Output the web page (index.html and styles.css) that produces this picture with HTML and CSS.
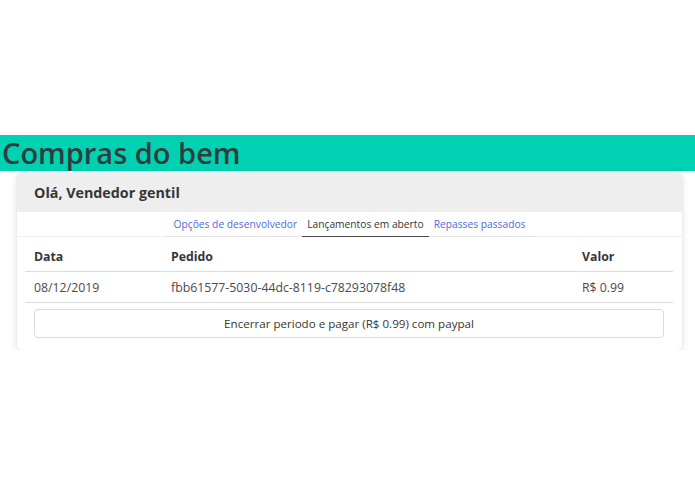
FILE: index.html
```html
<!DOCTYPE html>
<html lang="pt">
<head>
<meta charset="utf-8">
<title>Compras do bem</title>
<link rel="stylesheet" href="styles.css">
</head>
<body>
<header class="hero">
  <h1 class="hero-title">Compras do bem</h1>
</header>
<section class="card">
  <div class="card-header">Olá, Vendedor gentil</div>
  <nav class="tabs-row">
    <ul class="tabs">
      <li class="tab"><a class="tab-link">Opções de desenvolvedor</a></li>
      <li class="tab is-active"><a class="tab-link">Lançamentos em aberto</a></li>
      <li class="tab"><a class="tab-link">Repasses passados</a></li>
    </ul>
  </nav>
  <div class="card-body">
    <table class="table">
      <thead>
        <tr><th class="col-data">Data</th><th class="col-pedido">Pedido</th><th class="col-valor">Valor</th></tr>
      </thead>
      <tbody>
        <tr><td>08/12/2019</td><td>fbb61577-5030-44dc-8119-c78293078f48</td><td>R$ 0.99</td></tr>
      </tbody>
    </table>
    <button class="pay-button">Encerrar periodo e pagar (R$ 0.99) com paypal</button>
  </div>
</section>
</body>
</html>
```
FILE: styles.css
```css
html, body {
  margin: 0;
  padding: 0;
  background: #ffffff;
  font-family: "Open Sans", "Noto Sans", sans-serif;
  color: #4a4a4a;
}

.hero {
  margin-top: 135px;
  height: 36px;
  background: #00d1b2;
  display: flex;
  align-items: center;
}

.hero-title {
  margin: 0;
  padding-left: 2px;
  font-size: 29px;
  font-weight: 600;
  line-height: 36px;
  color: #2f3d3d;
}

.card {
  margin: 1px 0 0 17px;
  width: 665px;
  background: #fff;
  border-radius: 0 0 5px 5px;
  box-shadow: 0 3px 8px rgba(10, 10, 10, 0.12), 0 0 0 1px rgba(10, 10, 10, 0.02);
  padding-bottom: 12px;
}

.card-header {
  background: #eeeeee;
  height: 40px;
  display: flex;
  align-items: center;
  padding-left: 17px;
  font-size: 14.3px;
  font-weight: 700;
  color: #363636;
  border-radius: 4px 4px 0 0;
}

.tabs-row {
  border-bottom: 1px solid #f0f0f0;
  display: flex;
  justify-content: center;
}

.tabs {
  list-style: none;
  margin: 0;
  padding: 0 5px;
  display: flex;
  border-bottom: 1px solid #e4e4e4;
  margin-bottom: -1px;
}

.tab-link {
  display: block;
  padding: 0 5px;
  height: 24px;
  line-height: 24px;
  font-size: 10.25px;
  color: #4f6bd8;
  border-bottom: 1px solid transparent;
  margin-bottom: -1px;
}

.tab.is-active .tab-link {
  color: #363636;
  border-bottom-color: #4a4a4a;
}

.card-body {
  padding: 4px 9px 0 8px;
}

.table {
  width: 100%;
  border-collapse: collapse;
  font-size: 12.3px;
  color: #4a4a4a;
}

.table th,
.table td {
  text-align: left;
  padding: 0 9px;
  border-bottom: 1px solid #dbdbdb;
}

.table th {
  height: 30px;
  font-weight: 700;
  color: #363636;
}

.table td {
  height: 30px;
}

.col-data { width: 119px; }
.col-valor { width: 82px; }

.pay-button {
  display: block;
  margin: 6px 9px 0 9px;
  width: calc(100% - 18px);
  height: 29px;
  background: #fff;
  border: 1px solid #dbdbdb;
  border-radius: 4px;
  font-family: "Open Sans", "Noto Sans", sans-serif;
  font-size: 11.6px;
  color: #363636;
}
```
